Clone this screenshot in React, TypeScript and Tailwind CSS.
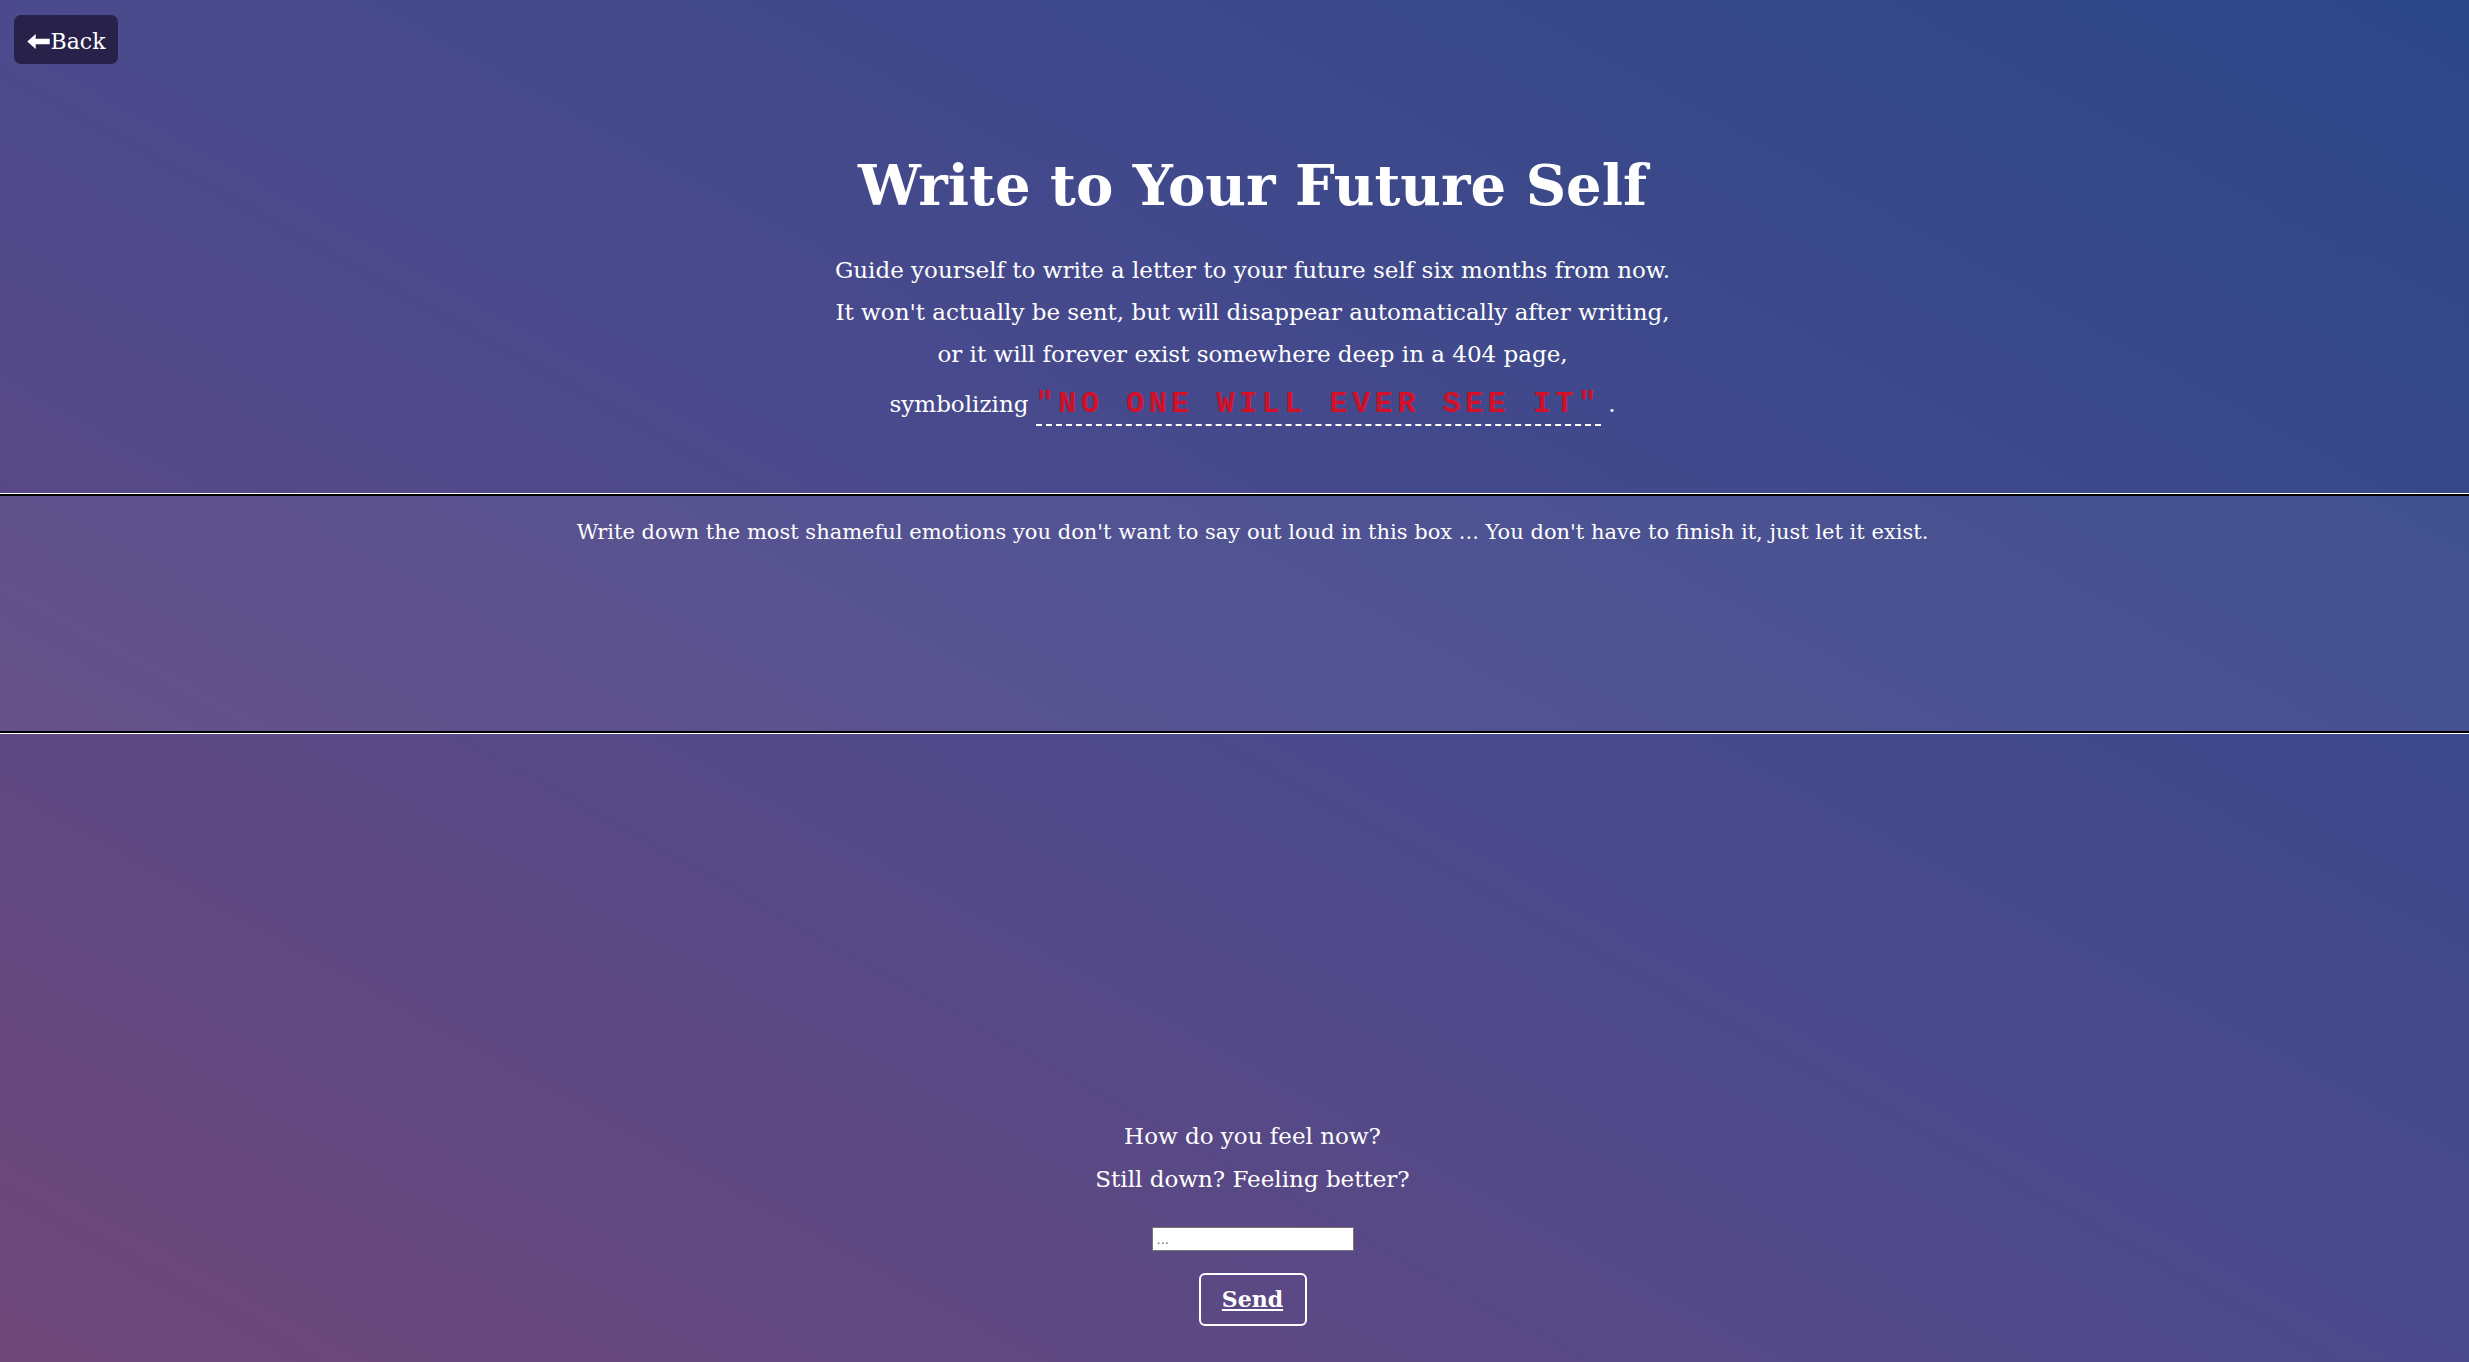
import { useState } from 'react';

// Flèche pleine façon "fa-arrow-left"
const ArrowLeft = () => (
  <svg width="23" height="15" viewBox="0 0 24 16" fill="currentColor" aria-hidden="true">
    <polygon points="0,8 9,0 9,5 24,5 24,11 9,11 9,16" />
  </svg>
);

const App = () => {
  const [letter, setLetter] = useState('');
  const [feeling, setFeeling] = useState('');

  return (
    <div className="min-h-screen w-full bg-[linear-gradient(to_top_right,#6f4779_0%,#4b4a8d_50%,#2b4788_100%)] text-white font-['DejaVu_Serif','Liberation_Serif',serif]">
      <div className="pl-[14px] pt-[15px]">
        <button className="flex h-[49px] w-[104px] items-center justify-center gap-[1px] rounded-[7px] bg-[#28224a] pt-[3px] text-[22px] text-white">
          <ArrowLeft />
          <span>Back</span>
        </button>
      </div>

      <h1 className="mt-[85px] pl-[36px] text-center text-[56px] font-bold leading-[72px]">
        Write to Your Future Self
      </h1>

      <div className="mt-[28px] pl-[36px] text-center text-[23px] leading-[42px]">
        <p>Guide yourself to write a letter to your future self six months from now.</p>
        <p>It won't actually be sent, but will disappear automatically after writing,</p>
        <p>or it will forever exist somewhere deep in a 404 page,</p>
        <p className="mt-[8px]">
          symbolizing{' '}
          <span className="border-b-2 border-dashed border-white pb-[3px] font-['Liberation_Mono',monospace] text-[30px] font-bold tracking-[4.6px] text-[#d40f28]">
            "NO ONE WILL EVER SEE IT"
          </span>{' '}
          .
        </p>
      </div>

      <div className="mt-[68px] border-y border-white">
        <textarea
          value={letter}
          onChange={(e) => setLetter(e.target.value)}
          placeholder="Write down the most shameful emotions you don't want to say out loud in this box ... You don't have to finish it, just let it exist."
          className="block h-[239px] w-full resize-none border-y-2 border-black bg-white/5 pl-[52px] pr-4 pt-[20px] text-center text-[21px] leading-[32px] text-white outline-none placeholder:text-white"
        />
      </div>

      <div className="mt-[381px] flex flex-col items-center pb-[35px] pl-[36px]">
        <p className="text-[23px] leading-[43px]">How do you feel now?</p>
        <p className="text-[23px] leading-[43px]">Still down? Feeling better?</p>
        <input
          value={feeling}
          onChange={(e) => setFeeling(e.target.value)}
          placeholder="..."
          className="mt-[26px] h-[24px] w-[202px] border border-[#767676] bg-white px-1 text-[13px] text-black placeholder:text-[#757575]"
        />
        <button className="mt-[22px] h-[53px] w-[108px] rounded-[6px] border-2 border-white text-[22px] font-bold text-white underline">
          Send
        </button>
      </div>
    </div>
  );
};

export default App;
